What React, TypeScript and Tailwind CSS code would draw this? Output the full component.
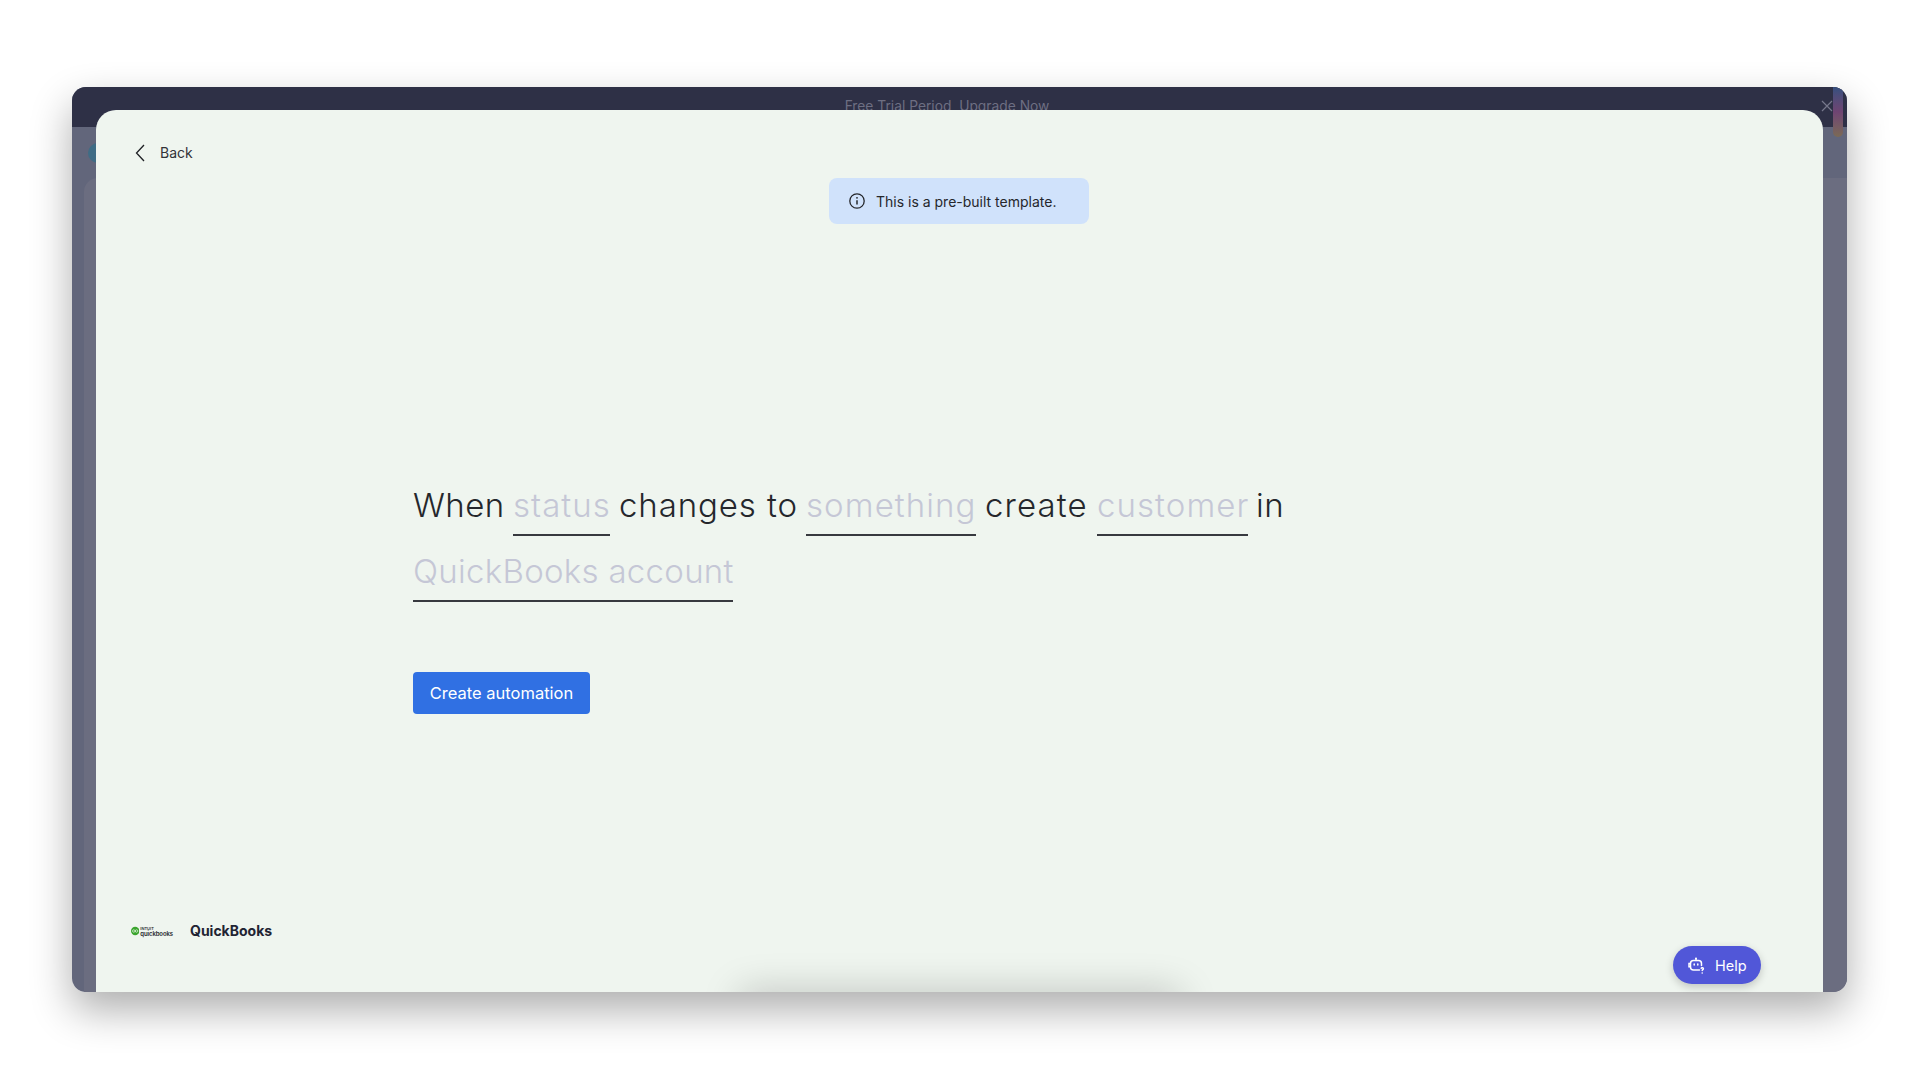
const body = { fontFamily: 'Inter, "Noto Sans", sans-serif' };

function Slot({ text, width }: { text: string; width: string }) {
  return (
    <span className={`${width} inline-block border-b-2 border-[#37393f] text-[#c5c7d6] h-[66px] pt-[9px] leading-[52px] whitespace-nowrap`}>
      {text}
    </span>
  );
}

function Word({ text, width }: { text: string; width: string }) {
  return <span className={`${width} inline-block text-[#25272c] h-[66px] pt-[9px] leading-[52px] whitespace-nowrap`}>{text}</span>;
}

function HelpIcon() {
  return (
    <svg width="18" height="18" viewBox="0 0 18 18" fill="none" stroke="white" strokeWidth="1.5" strokeLinecap="round">
      <path d="M8 1.5v2" />
      <circle cx="8" cy="1.6" r="1" fill="white" stroke="none" />
      <path d="M11.5 13H5.5a3 3 0 0 1-3-3V6.5a3 3 0 0 1 3-3h5a3 3 0 0 1 3 3v2" />
      <path d="M2.4 6.5H1v3.2h1.4" />
      <path d="M6.2 7v1M9.8 7v1" />
      <path d="M13.2 11.2c.3-.8 2.2-.7 2.2.5 0 1-1.2 1-1.2 1.9" />
      <circle cx="14.2" cy="16" r="0.8" fill="white" stroke="none" />
    </svg>
  );
}

function QbLogo() {
  return (
    <div className="flex items-center gap-[1px] w-[42px]">
      <svg width="12" height="12" viewBox="0 0 12 12">
        <circle cx="6" cy="6" r="6" fill="#3ba52e" />
        <circle cx="4" cy="6" r="1.8" fill="none" stroke="white" strokeWidth="0.9" />
        <circle cx="8" cy="6" r="1.8" fill="none" stroke="white" strokeWidth="0.9" />
      </svg>
      <div className="flex flex-col text-[#23262b] font-semibold leading-[5px]">
        <span className="text-[4px]">INTUIT</span>
        <span className="text-[6px] tracking-[-0.1px]">quickbooks</span>
      </div>
    </div>
  );
}

export default function App() {
  return (
    <div className="w-[1920px] h-[1080px] bg-white overflow-hidden pt-[87px] pl-[72px]" style={body}>
      {/* window */}
      <div className="relative w-[1775px] h-[905px] rounded-[14px] shadow-[0_18px_42px_rgba(0,0,0,0.32)]">
        <div className="absolute inset-0 rounded-[14px] overflow-hidden flex flex-col bg-[#62667b]">
          {/* top bar, dimmed behind the modal */}
          <div className="h-[40px] bg-[#2e3046] flex items-center justify-center shrink-0">
            <span className="text-[13.8px] text-[#6d6e82] -ml-[25px] -mt-[1px]">Free Trial Period&nbsp; Upgrade Now</span>
          </div>
          <div className="flex-1 flex flex-col pl-[12px] pt-[16px]">
            <div className="w-[20px] h-[20px] ml-[4px] rounded-full bg-[#3f6c85]" />
            <div className="flex-1 mt-[15px] rounded-tl-[14px] bg-[#6b6d80]" />
          </div>
          <div className="absolute top-0 right-[4px] w-[10px] h-[50px] rounded-b-full bg-gradient-to-b from-[#344f7e] via-[#6f4472] to-[#7b6a55]" />
          <svg className="absolute top-[13px] right-[14px]" width="12" height="12" viewBox="0 0 12 12" fill="none" stroke="#77788c" strokeWidth="1.2">
            <path d="M1 1l10 10M11 1L1 11" />
          </svg>
        </div>

        {/* modal */}
        <div className="absolute left-[24px] right-[24px] top-[23px] bottom-0 rounded-t-[20px] overflow-hidden bg-[#eff5ef] flex flex-col">
          <div className="absolute bottom-[-30px] left-[644px] w-[440px] h-[30px] shadow-[0_0_38px_rgba(0,0,0,0.22)]" />
          <div className="relative h-[114px] shrink-0">
            <div className="flex items-center pt-[32px] pl-[39px] text-[14px] text-[#323338]">
              <svg width="10" height="18" viewBox="0 0 10 18" fill="none" stroke="#1f2125" strokeWidth="1.3">
                <path d="M9 1L1.5 9 9 17" />
              </svg>
              <span className="ml-[15px]">Back</span>
            </div>
            <div className="absolute left-[733px] top-[68px] w-[260px] h-[46px] rounded-[8px] bg-[#d0e2fb] flex items-center pl-[20px] text-[14px] text-[#25272c]">
              <svg width="16" height="16" viewBox="0 0 16 16" fill="none" stroke="#25272c" strokeWidth="1.3">
                <circle cx="8" cy="8" r="7.2" />
                <path d="M8 7.2v4.2" strokeWidth="1.5" />
                <circle cx="8" cy="4.8" r="0.9" fill="#25272c" stroke="none" />
              </svg>
              <span className="ml-[11px]">This is a pre-built template.</span>
            </div>
          </div>

          {/* sentence */}
          <div className="ml-[317px] mt-[246px] w-[880px] text-[33px] font-light">
            <div className="flex gap-[8px]">
              <Word text="When" width="w-[92px] tracking-[0.45px]" />
              <Slot text="status" width="w-[97px] tracking-[1.05px]" />
              <Word text="changes to" width="w-[180px] tracking-[0.9px] pl-[1px]" />
              <Slot text="something" width="w-[170px] tracking-[1.08px]" />
              <Word text="create" width="w-[105px] tracking-[1.13px] pl-[1px]" />
              <Slot text="customer" width="w-[151px] tracking-[1.07px]" />
              <Word text="in" width="w-[28px] tracking-[0.45px]" />
            </div>
            <div className="flex">
              <Slot text="QuickBooks account" width="w-[320px] tracking-[0.28px]" />
            </div>
          </div>

          <button className="ml-[317px] mt-[70px] w-[177px] h-[42px] rounded-[4px] bg-[#3070e3] text-[16.5px] text-white">
            Create automation
          </button>

          <div className="flex items-center ml-[35px] mt-[206px] gap-[17px]">
            <QbLogo />
            <span className="text-[14px] font-bold text-[#1f2433]">QuickBooks</span>
          </div>
        </div>

        {/* help */}
        <button className="absolute left-[1601px] top-[859px] w-[88px] h-[38px] rounded-full bg-[#5157d8] shadow-[0_3px_8px_rgba(0,0,0,0.2)] flex items-center pl-[15px] pt-[1px] text-[14.5px] text-white">
          <HelpIcon />
          <span className="ml-[9px]">Help</span>
        </button>
      </div>
    </div>
  );
}
